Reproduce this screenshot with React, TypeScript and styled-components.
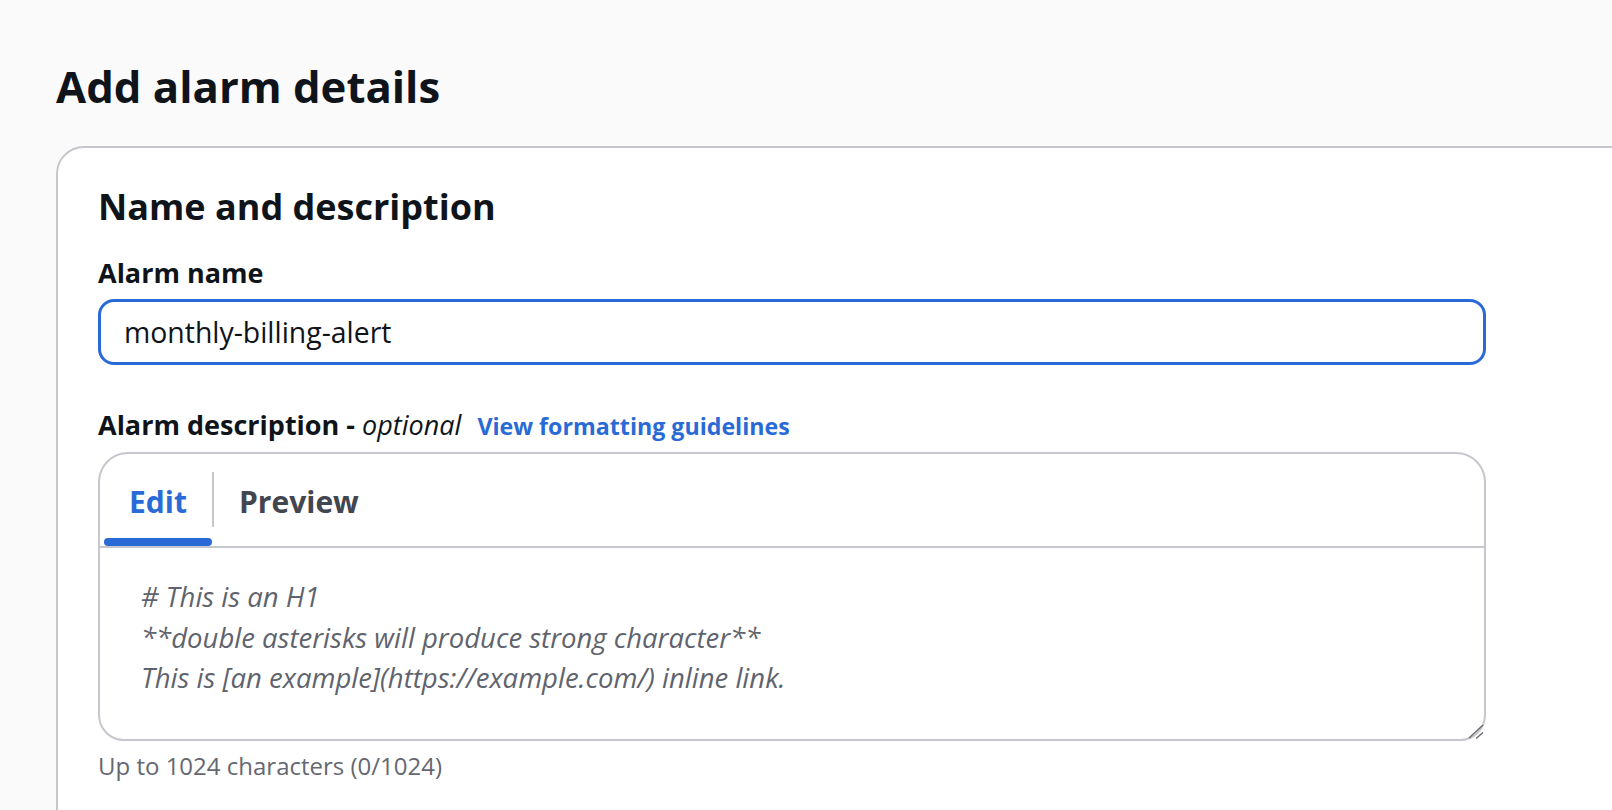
import styled, { createGlobalStyle } from "styled-components";

const GlobalStyle = createGlobalStyle`
  html, body {
    margin: 0;
    padding: 0;
    overflow: hidden;
    background: #fafafa;
  }
  body {
    font-family: "Open Sans", "Noto Sans", Arial, sans-serif;
    color: #0f141a;
  }
  * {
    box-sizing: border-box;
  }
`

const Page = styled.main`
  height: 810px;
  padding: 56px 0 0 56px;
  overflow: hidden;
`

const Title = styled.h1`
  margin: 0 0 30px;
  font-size: 43.7px;
  line-height: 60px;
  font-weight: 700;
  color: #0f141a;
`

const Card = styled.section`
  width: calc(100% + 80px);
  background: #ffffff;
  border: 2px solid #c6c6cd;
  border-radius: 28px;
  padding: 36px 40px 120px;
`

const CardTitle = styled.h2`
  margin: 0 0 25px;
  font-size: 36px;
  line-height: 46px;
  font-weight: 700;
`

const Field = styled.div`
  width: 1388px;
  & + & {
    margin-top: 42px;
  }
`

const Label = styled.label`
  display: block;
  margin-bottom: 8px;
  font-size: 27px;
  line-height: 36px;
  font-weight: 700;
  color: #0f141a;
`

const Optional = styled.i`
  font-weight: 400;
`

const InfoLink = styled.a`
  margin-left: 16px;
  font-size: 23.2px;
  font-weight: 700;
  color: #2a6ad6;
  text-decoration: none;
  cursor: pointer;
`

const TextInput = styled.input`
  display: block;
  width: 100%;
  height: 66px;
  padding: 0 21px 0 23px;
  border: 3px solid #2a6ad6;
  border-radius: 16px;
  outline: none;
  background: #ffffff;
  font-family: inherit;
  font-size: 28.4px;
  color: #0f141a;
`

const Editor = styled.div`
  position: relative;
  background: #ffffff;
  border: 2px solid #c6c6cd;
  border-radius: 30px 30px 26px 26px;
`

const TabStrip = styled.div`
  display: flex;
  padding-left: 4px;
  border-bottom: 2px solid #c6c6cd;
`

const Tab = styled.button<{ $active?: boolean }>`
  display: flex;
  flex-direction: column;
  padding: 0;
  border: 0;
  background: none;
  font-family: inherit;
  cursor: pointer;

  span {
    padding: 28px 25px 0;
    font-size: 30px;
    line-height: 40px;
    font-weight: 700;
    color: ${(p) => (p.$active ? "#2a6ad6" : "#424650")};
  }

  &::after {
    content: "";
    margin-top: 16px;
    height: 8px;
    border-radius: 4px;
    background: ${(p) => (p.$active ? "#2a6ad6" : "transparent")};
  }
`

const TabDivider = styled.div`
  width: 2px;
  height: 55px;
  margin-top: 18px;
  background: #c6c6cd;
`

const EditorBody = styled.div`
  height: 191px;
  padding: 29px 40px 0 41px;
  font-size: 27.5px;
  line-height: 40.5px;
  font-style: italic;
  color: #5f636d;
`

const Grip = styled.svg`
  position: absolute;
  right: 0;
  bottom: 0;
  width: 16px;
  height: 16px;
`

const Hint = styled.div`
  margin-top: 9px;
  font-size: 24px;
  line-height: 32px;
  color: #656871;
`

const placeholder = [
  "# This is an H1",
  "**double asterisks will produce strong character**",
  "This is [an example](https://example.com/) inline link.",
]

export default function App() {
  return (
    <>
      <GlobalStyle />
      <Page>
        <Title>Add alarm details</Title>
        <Card>
          <CardTitle>Name and description</CardTitle>
          <Field>
            <Label htmlFor="alarm-name">Alarm name</Label>
            <TextInput id="alarm-name" defaultValue="monthly-billing-alert" />
          </Field>
          <Field>
            <Label>
              Alarm description - <Optional>optional</Optional>
              <InfoLink>View formatting guidelines</InfoLink>
            </Label>
            <Editor>
              <TabStrip>
                <Tab $active>
                  <span>Edit</span>
                </Tab>
                <TabDivider />
                <Tab>
                  <span>Preview</span>
                </Tab>
              </TabStrip>
              <EditorBody>
                {placeholder.map((line) => (
                  <div key={line}>{line}</div>
                ))}
              </EditorBody>
              <Grip viewBox="0 0 16 16">
                <path d="M1 15 L15 2 M8 15.5 L15 9.5" stroke="#6b6b6b" strokeWidth="1.4" />
              </Grip>
            </Editor>
            <Hint>Up to 1024 characters (0/1024)</Hint>
          </Field>
        </Card>
      </Page>
    </>
  )
}
